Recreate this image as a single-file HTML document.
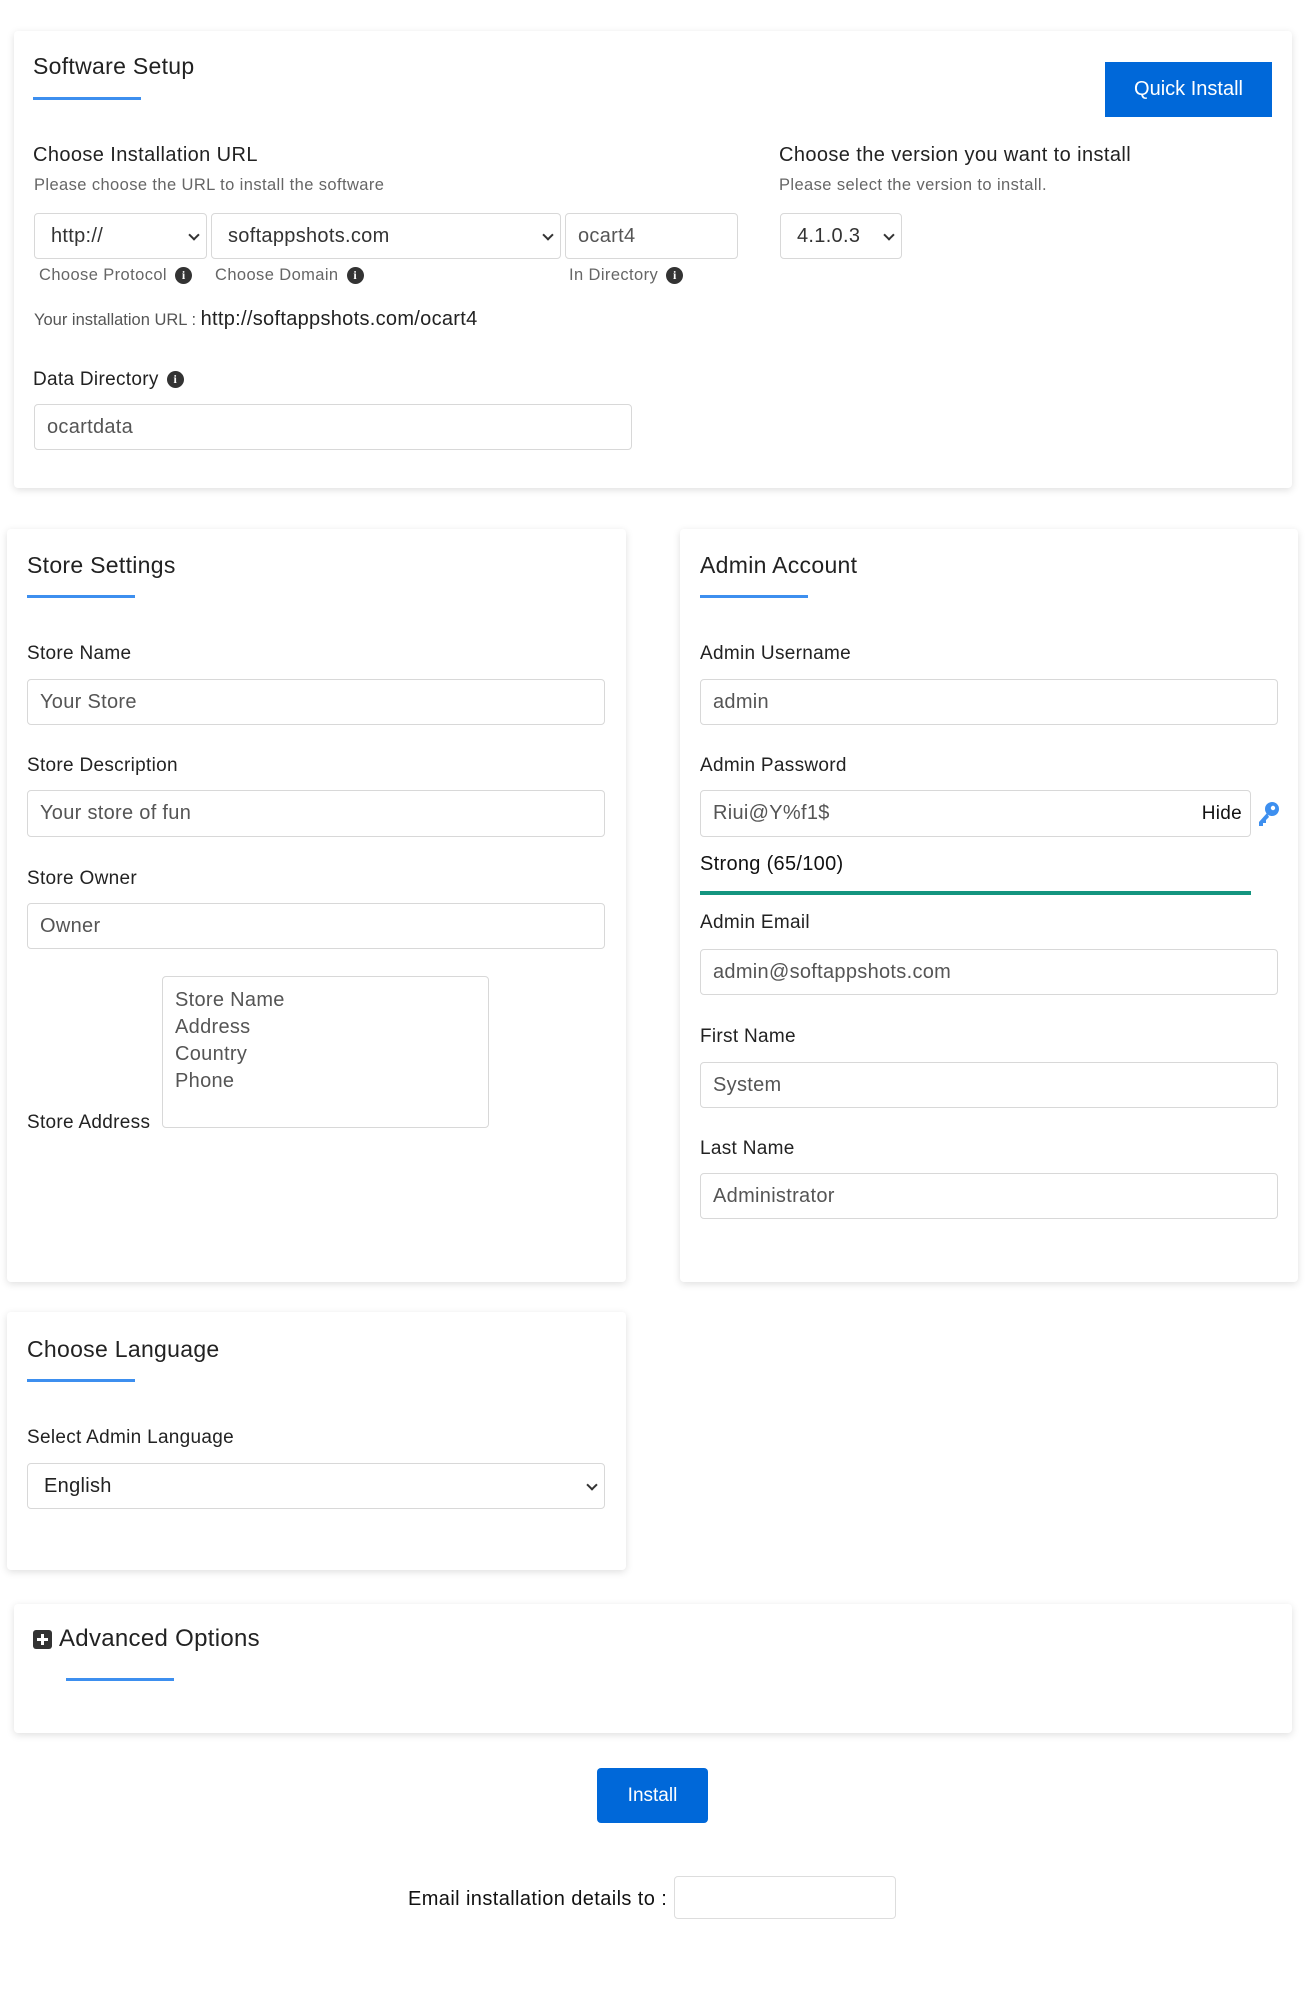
<!DOCTYPE html><html><head><meta charset="utf-8"><style>
*{box-sizing:border-box;margin:0;padding:0}
body{width:1305px;height:2000px;background:#fff;font-family:"Liberation Sans",sans-serif;color:#222;position:relative;overflow:hidden}
.a{position:absolute;white-space:nowrap}
.card{position:absolute;background:#fff;border-radius:4px;box-shadow:0 2px 8px rgba(0,0,0,.13)}
.t{font-size:23px;color:#222;letter-spacing:.3px}
.ul{position:absolute;height:3px;background:#3d8fef;width:108px}
.lb{font-size:19px;color:#222;letter-spacing:.3px}
.in{position:absolute;border:1px solid #d8d8d8;border-radius:4px;background:#fff;font-size:20px;color:#555;padding-left:12px;display:flex;align-items:center;letter-spacing:.3px}
.sm{font-size:16.5px;color:#666;letter-spacing:.4px}
.i{display:inline-block;width:17px;height:17px;border-radius:50%;background:#333;color:#fff;font-size:12px;font-weight:bold;text-align:center;line-height:17px;vertical-align:middle;margin-left:8px;font-family:"Liberation Serif",serif;letter-spacing:0}
.car{position:absolute;right:8px;top:50%;margin-top:-5px;width:8px;height:8px;border-right:2px solid #333;border-bottom:2px solid #333;transform:rotate(45deg)}
</style></head><body>
<div class="card" style="left:14px;top:31px;width:1278px;height:457px"></div>
<div class="a t" style="left:33px;top:53px">Software Setup</div>
<div class="ul" style="left:33px;top:97px"></div>
<div class="a" style="left:1105px;top:62px;width:167px;height:55px;background:#0068d9;color:#fff;font-size:20px;display:flex;align-items:center;justify-content:center">Quick Install</div>
<div class="a" style="left:33px;top:144px;font-size:20px;letter-spacing:.4px">Choose Installation URL</div>
<div class="a sm" style="left:34px;top:176px">Please choose the URL to install the software</div>
<div class="a" style="left:779px;top:144px;font-size:20px;letter-spacing:.4px">Choose the version you want to install</div>
<div class="a sm" style="left:779px;top:176px">Please select the version to install.</div>
<div class="in" style="left:34px;top:213px;width:173px;height:46px;padding-left:16px;color:#333">http://<span class="car"></span></div>
<div class="in" style="left:211px;top:213px;width:350px;height:46px;padding-left:16px;color:#333">softappshots.com<span class="car"></span></div>
<div class="in" style="left:565px;top:213px;width:173px;height:46px">ocart4</div>
<div class="in" style="left:780px;top:213px;width:122px;height:46px;padding-left:16px;color:#333">4.1.0.3<span class="car"></span></div>
<div class="a sm" style="left:39px;top:266px">Choose Protocol<span class="i">i</span></div>
<div class="a sm" style="left:215px;top:266px">Choose Domain<span class="i">i</span></div>
<div class="a sm" style="left:569px;top:266px">In Directory<span class="i">i</span></div>
<div class="a" style="left:34px;top:308px;font-size:16.5px;color:#555">Your installation URL : <span style="font-size:20px;color:#222;letter-spacing:.3px">http://softappshots.com/ocart4</span></div>
<div class="a lb" style="left:33px;top:369px">Data Directory<span class="i">i</span></div>
<div class="in" style="left:34px;top:404px;width:598px;height:46px">ocartdata</div>

<div class="card" style="left:7px;top:529px;width:619px;height:753px"></div>
<div class="card" style="left:680px;top:529px;width:618px;height:753px"></div>
<div class="a t" style="left:27px;top:552px">Store Settings</div>
<div class="ul" style="left:27px;top:595px"></div>
<div class="a t" style="left:700px;top:552px">Admin Account</div>
<div class="ul" style="left:700px;top:595px"></div>
<div class="a lb" style="left:27px;top:643px">Store Name</div>
<div class="in" style="left:27px;top:679px;width:578px;height:46px">Your Store</div>
<div class="a lb" style="left:27px;top:755px">Store Description</div>
<div class="in" style="left:27px;top:790px;width:578px;height:47px">Your store of fun</div>
<div class="a lb" style="left:27px;top:868px">Store Owner</div>
<div class="in" style="left:27px;top:903px;width:578px;height:46px">Owner</div>
<div class="in" style="left:162px;top:976px;width:327px;height:152px;align-items:flex-start;padding-top:10px;line-height:27px;white-space:pre">Store Name
Address
Country
Phone</div>
<div class="a lb" style="left:27px;top:1112px">Store Address</div>
<div class="a lb" style="left:700px;top:643px">Admin Username</div>
<div class="in" style="left:700px;top:679px;width:578px;height:46px">admin</div>
<div class="a lb" style="left:700px;top:755px">Admin Password</div>
<div class="in" style="left:700px;top:790px;width:551px;height:47px">Riui@Y%f1$<span style="position:absolute;right:8px;color:#111;font-size:19px">Hide</span></div>
<svg class="a" style="left:1256px;top:801px" width="24" height="26" viewBox="0 0 24 26"><circle cx="16" cy="8" r="7" fill="#3d8fef"/><circle cx="17" cy="7" r="2.2" fill="#fff"/><path d="M11 12 L3 21 L3 25 L7 25 L7 22 L10 22 L10 19 L13 16" fill="#3d8fef"/></svg>
<div class="a" style="left:700px;top:853px;font-size:20px;color:#111;letter-spacing:.3px">Strong (65/100)</div>
<div class="a" style="left:700px;top:891px;width:551px;height:4px;background:#14957f"></div>
<div class="a lb" style="left:700px;top:912px">Admin Email</div>
<div class="in" style="left:700px;top:949px;width:578px;height:46px">admin@softappshots.com</div>
<div class="a lb" style="left:700px;top:1026px">First Name</div>
<div class="in" style="left:700px;top:1062px;width:578px;height:46px">System</div>
<div class="a lb" style="left:700px;top:1138px">Last Name</div>
<div class="in" style="left:700px;top:1173px;width:578px;height:46px">Administrator</div>

<div class="card" style="left:7px;top:1312px;width:619px;height:258px"></div>
<div class="a t" style="left:27px;top:1336px">Choose Language</div>
<div class="ul" style="left:27px;top:1379px"></div>
<div class="a lb" style="left:27px;top:1427px">Select Admin Language</div>
<div class="in" style="left:27px;top:1463px;width:578px;height:46px;padding-left:16px;color:#222">English<span class="car"></span></div>

<div class="card" style="left:14px;top:1604px;width:1278px;height:129px"></div>
<div class="a" style="left:33px;top:1630px;width:19px;height:19px;background:#333;border-radius:3px"><div style="position:absolute;left:4px;top:8px;width:11px;height:3px;background:#fff"></div><div style="position:absolute;left:8px;top:4px;width:3px;height:11px;background:#fff"></div></div>
<div class="a" style="left:59px;top:1625px;font-size:24px;color:#222;letter-spacing:.3px">Advanced Options</div>
<div class="ul" style="left:66px;top:1678px"></div>

<div class="a" style="left:597px;top:1768px;width:111px;height:55px;background:#0068d9;border-radius:4px;color:#fff;font-size:19px;display:flex;align-items:center;justify-content:center">Install</div>
<div class="a" style="left:408px;top:1888px;font-size:20px;color:#111;letter-spacing:.4px">Email installation details to :</div>
<div class="a" style="left:674px;top:1876px;width:222px;height:43px;border:1px solid #ddd;border-radius:4px"></div>
</body></html>
